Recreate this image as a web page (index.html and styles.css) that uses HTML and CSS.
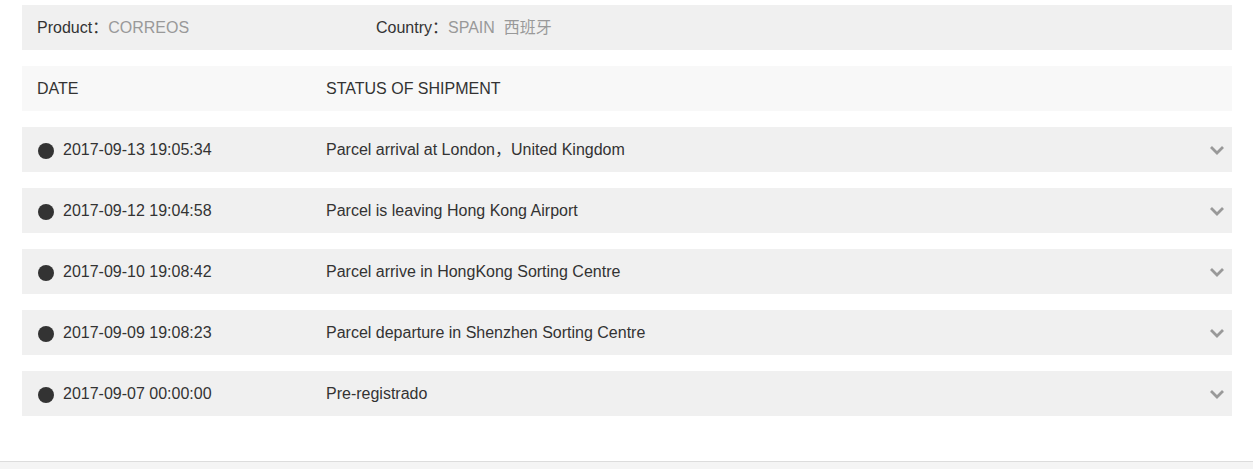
FILE: index.html
```html
<!DOCTYPE html>
<html>
<head>
<meta charset="utf-8">
<link rel="stylesheet" href="styles.css">
</head>
<body>
<div class="page">
  <div class="info">
    <div class="info-item product">Product：<span class="muted">CORREOS</span></div>
    <div class="info-item">Country：<span class="muted">SPAIN&nbsp; 西班牙</span></div>
  </div>
  <div class="head">
    <div class="col-date">DATE</div>
    <div class="col-status">STATUS OF SHIPMENT</div>
  </div>
  <div class="rows">
    <div class="row"><div class="col-date"><span class="dot"></span>2017-09-13 19:05:34</div><div class="col-status">Parcel arrival at London，United Kingdom</div><svg class="chev" viewBox="0 0 16 10" width="16" height="10"><path d="M2 2 L8 8 L14 2" fill="none" stroke="#999" stroke-width="2.8"/></svg></div>
    <div class="row"><div class="col-date"><span class="dot"></span>2017-09-12 19:04:58</div><div class="col-status">Parcel is leaving Hong Kong Airport</div><svg class="chev" viewBox="0 0 16 10" width="16" height="10"><path d="M2 2 L8 8 L14 2" fill="none" stroke="#999" stroke-width="2.8"/></svg></div>
    <div class="row"><div class="col-date"><span class="dot"></span>2017-09-10 19:08:42</div><div class="col-status">Parcel arrive in HongKong Sorting Centre</div><svg class="chev" viewBox="0 0 16 10" width="16" height="10"><path d="M2 2 L8 8 L14 2" fill="none" stroke="#999" stroke-width="2.8"/></svg></div>
    <div class="row"><div class="col-date"><span class="dot"></span>2017-09-09 19:08:23</div><div class="col-status">Parcel departure in Shenzhen Sorting Centre</div><svg class="chev" viewBox="0 0 16 10" width="16" height="10"><path d="M2 2 L8 8 L14 2" fill="none" stroke="#999" stroke-width="2.8"/></svg></div>
    <div class="row"><div class="col-date"><span class="dot"></span>2017-09-07 00:00:00</div><div class="col-status">Pre-registrado</div><svg class="chev" viewBox="0 0 16 10" width="16" height="10"><path d="M2 2 L8 8 L14 2" fill="none" stroke="#999" stroke-width="2.8"/></svg></div>
  </div>
</div>
<div class="footer"></div>
</body>
</html>
```
FILE: styles.css
```css
html, body {
  margin: 0;
  padding: 0;
  background: #fff;
}
body {
  font-family: "Liberation Sans", Arial, "Noto Sans CJK SC", sans-serif;
  font-size: 16px;
  line-height: 20px;
  color: #333;
}
.page {
  width: 1210px;
  margin-left: 22px;
  padding-top: 5px;
  padding-bottom: 45px;
  display: flex;
  flex-direction: column;
  gap: 16px;
}
.info {
  height: 45px;
  background: #f0f0f0;
  display: flex;
  align-items: center;
  padding-left: 15px;
}
.info-item {
  height: 20px;
  overflow: visible;
}
.info-item.product {
  width: 339px;
}
.muted {
  color: #999;
}
.head {
  height: 45px;
  background: #f8f8f8;
  display: flex;
  align-items: center;
  padding-left: 15px;
}
.col-date {
  width: 289px;
  display: flex;
  align-items: center;
}
.col-status {
  flex: 1;
  height: 20px;
}
.rows {
  display: flex;
  flex-direction: column;
  gap: 16px;
}
.row {
  height: 45px;
  background: #f0f0f0;
  display: flex;
  align-items: center;
  padding-left: 15px;
  padding-right: 7px;
}
.dot {
  width: 16px;
  height: 16px;
  border-radius: 50%;
  background: #333;
  margin-left: 1px;
  margin-right: 9px;
  margin-top: 2px;
  flex: none;
}
.chev {
  flex: none;
}
.footer {
  border-top: 1px solid #dcdcdc;
  background: #f4f4f4;
  height: 7px;
}
```
